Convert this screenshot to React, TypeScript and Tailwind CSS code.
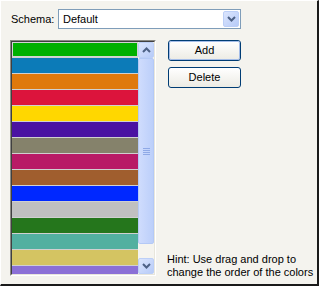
import React from 'react';

const colors = [
  '#00b000',
  '#0c7bb8',
  '#df790c',
  '#dc143c',
  '#ffd700',
  '#4a12a2',
  '#85826b',
  '#b81a66',
  '#a05e2e',
  '#0028ff',
  '#c0c0c0',
  '#25761c',
  '#52b0a0',
  '#d4c462',
  '#8b70d6',
];

const Chevron = ({ up }: { up?: boolean }) => (
  <svg width="9" height="6" viewBox="0 0 9 6" className="block">
    <path
      d={up ? 'M1 5 L4.5 1.5 L8 5' : 'M1 1 L4.5 4.5 L8 1'}
      fill="none"
      stroke="#4d6185"
      strokeWidth="2"
    />
  </svg>
);

const ScrollButton = ({ up }: { up?: boolean }) => (
  <div className="w-[16px] h-[16px] flex items-center justify-center rounded-[2px] border border-[#bccff7] bg-gradient-to-br from-[#dbe5fd] to-[#b7cbf8]">
    <Chevron up={up} />
  </div>
);

const XpButton = ({ label, isDefault }: { label: string; isDefault?: boolean }) => (
  <button className="w-[73px] h-[21px] rounded-[3px] border border-[#003c74] bg-gradient-to-b from-white to-[#ecebe4] p-0">
    <div
      className={
        isDefault
          ? 'h-full w-full flex items-center justify-center rounded-[2px] border border-[#a4bde8] text-black'
          : 'h-full w-full flex items-center justify-center text-black'
      }
    >
      {label}
    </div>
  </button>
);

export default function App() {
  return (
    <div className="w-[319px] h-[286px] box-border bg-[#f4f3ee] border-l border-t border-white border-r-2 border-b-2 border-r-[#1a1a1a] border-b-[#1a1a1a] text-[11px] leading-[13px] text-black font-['Liberation_Sans',Arial,sans-serif] flex flex-col">
      {/* schema row */}
      <div className="flex items-center pl-[10px] pt-[8px]">
        <span className="w-[47px]">Schema:</span>
        <div className="w-[183px] h-[20px] border border-[#7f9db9] bg-white flex items-center p-[1px]">
          <span className="flex-1 pl-[3px]">Default</span>
          <ScrollButton />
        </div>
      </div>

      <div className="flex pl-[9px] pt-[11px]">
        {/* color list */}
        <div className="w-[146px] h-[236px] border border-t-[#8a8a84] border-l-[#8a8a84] border-r-white border-b-white">
          <div className="h-full border border-t-[#404040] border-l-[#404040] border-r-[#e8e6dc] border-b-[#e8e6dc] flex">
            <div className="w-[126px] h-full overflow-hidden bg-[#d0d0d0] flex flex-col gap-[1px]">
              {colors.map((c, i) => (
                <div
                  key={c}
                  className={i === 0 ? 'h-[15px] shrink-0 border border-[#d4d4d4]' : 'h-[15px] shrink-0'}
                  style={{ backgroundColor: c }}
                />
              ))}
            </div>
            <div className="w-[16px] h-full bg-[#f5f4ef] flex flex-col">
              <ScrollButton up />
              <div className="h-[186px] rounded-[2px] border border-[#b4c9f6] bg-gradient-to-r from-[#cfdcfd] to-[#bccffa] flex flex-col items-center justify-center gap-[1px]">
                {[0, 1, 2, 3].map((k) => (
                  <div key={k} className="w-[7px] h-[1px] bg-[#8fa9e6]" />
                ))}
              </div>
              <div className="flex-1" />
              <ScrollButton />
            </div>
          </div>
        </div>

        {/* buttons + hint */}
        <div className="flex flex-col pl-[12px]">
          <XpButton label="Add" isDefault />
          <div className="mt-[6px]">
            <XpButton label="Delete" />
          </div>
          <div className="mt-auto mb-[-3px] ml-[-1px] whitespace-nowrap">
            Hint: Use drag and drop to
            <br />
            change the order of the colors
          </div>
        </div>
      </div>
    </div>
  );
}
